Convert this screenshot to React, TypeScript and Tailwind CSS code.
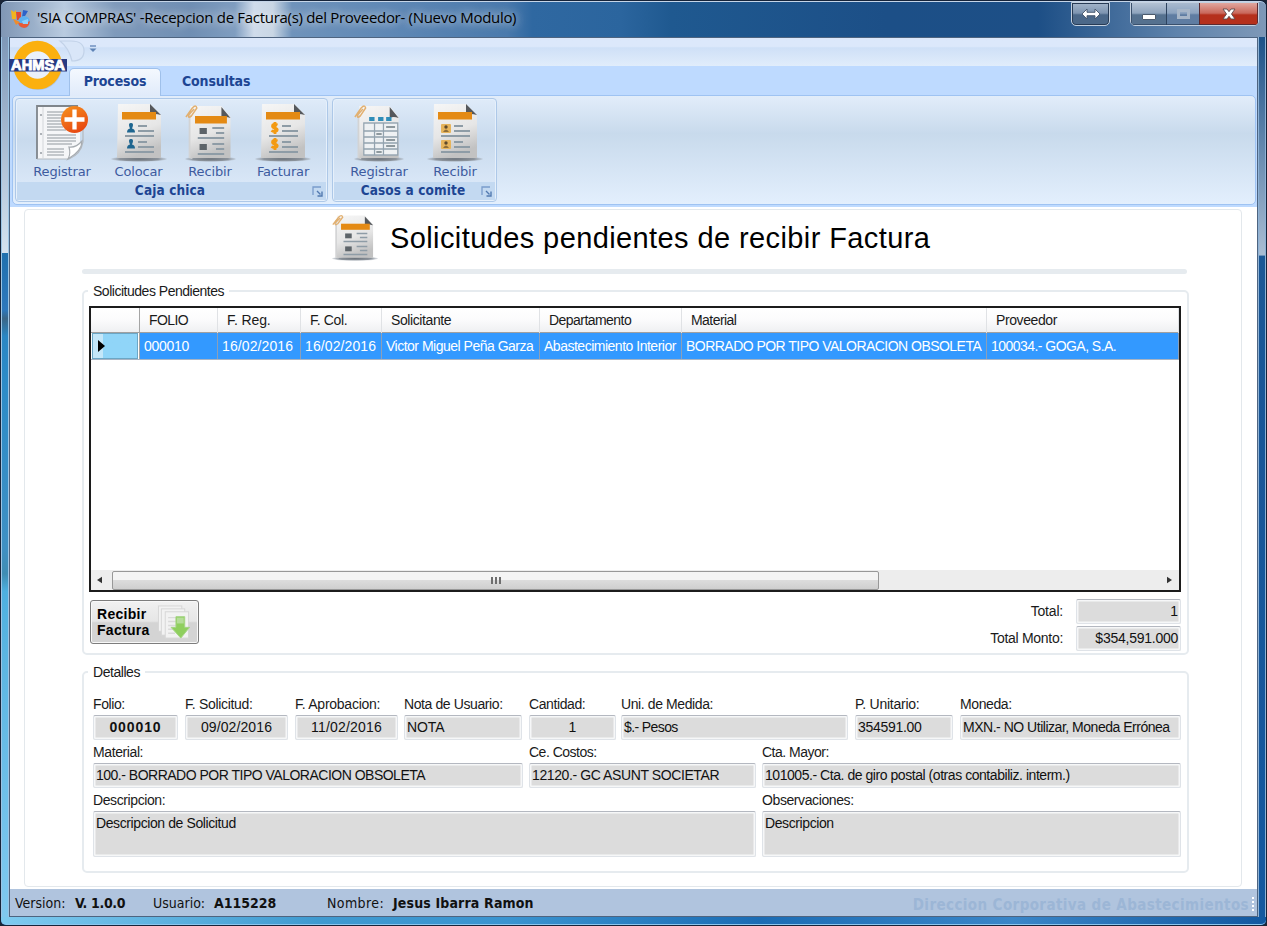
import React from "react";

type DocKind = "people" | "form" | "money" | "grid" | "box";

function Clip() {
  return (
    <path d="M1 13 L8 4 Q12 0 13 4 L7 12 Q3 15 4 11 L10 5" fill="none" stroke="#e2b070" strokeWidth="1.6" />
  );
}

function DocIcon({ kind, className }: { kind: DocKind; className: string }) {
  const clipped = kind === "form" || kind === "grid";
  const id = "paper-" + kind;
  const rows = [24, 40];
  return (
    <svg viewBox="0 0 56 58" className={className} preserveAspectRatio="none">
      <defs>
        <linearGradient id={id} x1="0" y1="0" x2="0.3" y2="1">
          <stop offset="0" stopColor="#f6f6f6" />
          <stop offset="0.6" stopColor="#e6e6e6" />
          <stop offset="1" stopColor="#c2c2c2" />
        </linearGradient>
        <radialGradient id={id + "-s"}>
          <stop offset="0" stopColor="#6d747c" />
          <stop offset="0.7" stopColor="#8c939b" />
          <stop offset="1" stopColor="#a0a8b2" stopOpacity="0.3" />
        </radialGradient>
      </defs>
      <ellipse cx="28" cy="55" rx="28" ry="2.8" fill={`url(#${id}-s)`} />
      {clipped ? (
        <>
          <path d="M4 8 L8 4 L8 55 L4 54 Z" fill="#d2d3d4" />
          <path d="M6 2 H40 L50 13 V54 H6 Z" fill={`url(#${id})`} />
          <path d="M40 3 L50 14 Q44 12 40 14 Z" fill="#55585c" />
        </>
      ) : (
        <>
          <path d="M7 0 H39 L50 11 V54 H6 Z" fill={`url(#${id})`} />
          <path d="M39 0 L50 11 Q43 9 39 11 Z" fill="#55585c" />
        </>
      )}
      {kind !== "grid" && (
        <rect x="11" y={clipped ? 12 : 8} width={clipped ? 35 : 34} height="7.5" fill="#e48a14" />
      )}
      {kind === "grid" ? (
        <g>
          <rect x="17" y="13" width="6" height="4" fill="#2f8db8" />
          <rect x="27" y="13" width="6" height="4" fill="#2f8db8" />
          <rect x="36" y="13" width="6" height="4" fill="#2f8db8" />
          <g fill="none" stroke="#93a3af" strokeWidth="1.4">
            <rect x="11" y="19" width="38" height="32" fill="#eef1f3" />
            <path d="M11 27 H49 M11 33 H49 M11 39 H49 M11 45 H49 M23 19 V51 M33 19 V51" />
          </g>
          <path d="M36 23 H46 M25 30 H31 M36 36 H46 M36 42 H46 M25 48 H31" stroke="#8d989d" strokeWidth="2" />
        </g>
      ) : (
        rows.map((y0) => {
          const y = clipped ? y0 : y0 - 2;
          return (
            <g key={y}>
              <path
                d={`M${clipped ? 30 : 27} ${y} H${clipped ? 43 : 36} M${clipped ? 34 : 27} ${y + 5} H43 M14 ${y + 10} H43`}
                stroke="#8e9ca6"
                strokeWidth="1.9"
              />
              {kind === "people" && (
                <path
                  d={`M16 ${y + 6.500} Q16 ${y + 3} 19 ${y + 2.500} Q16.500 ${y - 3} 20 ${y - 3} Q23.500 ${y - 3} 21 ${y + 2.500} Q24 ${y + 3} 24 ${y + 6.500} Z`}
                  fill="#1f6690"
                />
              )}
              {kind === "form" && <rect x="16" y={y} width="8" height="6" fill="#5d6469" />}
              {kind === "money" && (
                <path
                  d={`M22.500 ${y - 1} Q17.500 ${y - 3} 17.500 ${y} Q17.500 ${y + 1.500} 20 ${y + 2} Q23 ${y + 3} 22 ${y + 4.500} Q19 ${y + 6.500} 16.500 ${y + 4.500} M20 ${y - 4} V${y + 8}`}
                  fill="none"
                  stroke="#f39a12"
                  strokeWidth="2.8"
                />
              )}
              {kind === "box" && (
                <>
                  <rect x="14" y={y - 2} width="10" height="9" rx="1" fill="#e6b45c" />
                  <circle cx="19" cy={y + 1} r="1.7" fill="#5e4a2c" />
                  <path d={`M16 ${y + 6} Q19 ${y + 1} 22 ${y + 6} Z`} fill="#8e6e3a" />
                </>
              )}
            </g>
          );
        })
      )}
      {clipped && <Clip />}
    </svg>
  );
}

function NewDocIcon() {
  return (
    <svg viewBox="0 0 56 58" className="h-[58px] w-14">
      <defs>
        <linearGradient id="plus" x1="0" y1="0" x2="0.5" y2="1">
          <stop offset="0" stopColor="#f7941d" />
          <stop offset="1" stopColor="#e84a12" />
        </linearGradient>
      </defs>
      <path d="M3 2 H46 V42 L34 55 H3 Z" fill="#f5f6f8" />
      <path d="M3 55 V2 H44" fill="none" stroke="#7f858b" strokeWidth="1.8" />
      <path d="M3 55 H35 Q47 50 49 38 V20" fill="none" stroke="#b4b9bf" strokeWidth="1.2" />
      <path d="M9 3 V55" stroke="#d3d6da" strokeWidth="1" />
      <path d="M13 8 H31 M13 11 H28 M13 14 H27 M13 17 H27 M13 20 H28 M13 23 H29 M13 26 H32 M13 31 H42 M13 34 H42 M13 37 H42 M13 40 H38 M13 45 H30 M13 48 H30 M13 51 H30" stroke="#c3c7cb" strokeWidth="2.200" />
      <circle cx="7" cy="11" r="1.1" fill="#9da2a8" />
      <circle cx="7" cy="30" r="1.1" fill="#9da2a8" />
      <circle cx="7" cy="49" r="1.1" fill="#9da2a8" />
      <path d="M34 55 Q37 50 35 43 Q42 44 48 37 Q48 47 34 55 Z" fill="#fff" stroke="#a6abb0" strokeWidth="1.2" />
      <circle cx="40.500" cy="15.500" r="13.500" fill="url(#plus)" />
      <path d="M40.500 5.500 V25.500 M30.500 15.500 H50.500" stroke="#fff" strokeWidth="4.300" />
    </svg>
  );
}

function Launcher() {
  return (
    <svg viewBox="0 0 11 11" className="h-[11px] w-[11px]">
      <path d="M1 9 V1 H9" fill="none" stroke="#7a9ccc" strokeWidth="1.300" />
      <path d="M5 5 L8.500 8.500 M10 5.500 V10 H5.500" fill="none" stroke="#5279b0" strokeWidth="1.400" />
    </svg>
  );
}

function RibbonItem({ label, width, children }: { label: string; width: string; children: React.ReactNode }) {
  return (
    <div className={`flex flex-col items-center ${width}`}>
      <div className="flex h-[58px] items-end">{children}</div>
      <span className="mt-px h-[18px] font-['DejaVu_Sans',sans-serif] text-[13px] leading-[18px] tracking-[-0.150px] whitespace-nowrap text-[#3d5b9f]">{label}</span>
    </div>
  );
}

function RibbonGroup({ title, width, pad, titleShift, children }: { title: string; width: string; pad: string; titleShift: string; children: React.ReactNode }) {
  return (
    <div className={`flex h-[104px] flex-col rounded-[4px] border border-[#adc8e8] bg-gradient-to-b from-[#dfebf9] via-[#c8daed] via-40% to-[#e0ecfb] p-px shadow-[inset_0_0_0_1px_#e6f0fb] ${width}`}>
      <div className={`flex h-[82px] pt-[4px] ${pad}`}>{children}</div>
      <div className="flex h-[18px] items-center bg-[#c3d9f1] pr-[3px]">
        <span className={`flex-1 pb-[2px] text-center text-[13.500px] leading-[16px] font-bold tracking-[0.120px] text-[#1d4593] ${titleShift}`}>{title}</span>
        <Launcher />
      </div>
    </div>
  );
}

function Label({ children, className = "tracking-[-0.400px]" }: { children: React.ReactNode; className?: string }) {
  return <div className={`h-[20px] text-[14px] leading-[19px] whitespace-nowrap text-[#1a1a1a] ${className}`}>{children}</div>;
}

function Box({ children, className = "" }: { children: React.ReactNode; className?: string }) {
  return (
    <div className={`rounded-[2px] border border-[#dfe3e8] border-t-[#b4b8c0] bg-[#dcdcdc] px-[2px] pt-[2px] text-[14px] leading-[19px] whitespace-nowrap text-[#111] shadow-[inset_0_0_0_1.500px_#f6f7f8] ${className}`}>
      {children}
    </div>
  );
}

function Field({ label, value, box, labelClass, h = "h-[25px]" }: { label: string; value: string; box: string; labelClass?: string; h?: string }) {
  return (
    <div>
      <Label className={labelClass}>{label}</Label>
      <Box className={`${h} ${box}`}>{value}</Box>
    </div>
  );
}

const columns = [
  { head: "FOLIO", value: "000010", headTrack: "tracking-[-0.600px]", track: "tracking-[-0.300px]" },
  { head: "F. Reg.", value: "16/02/2016", headTrack: "tracking-[-0.100px]", track: "tracking-[0.100px]" },
  { head: "F. Col.", value: "16/02/2016", headTrack: "tracking-[-0.350px]", track: "tracking-[0.100px]" },
  { head: "Solicitante", value: "Victor Miguel Peña Garza", headTrack: "tracking-[-0.400px]", track: "tracking-[-0.500px]" },
  { head: "Departamento", value: "Abastecimiento Interior", headTrack: "tracking-[-0.550px]", track: "tracking-[-0.490px]" },
  { head: "Material", value: "BORRADO POR TIPO VALORACION OBSOLETA", headTrack: "tracking-[-0.550px]", track: "tracking-[-0.530px]" },
  { head: "Proveedor", value: "100034.- GOGA, S.A.", headTrack: "tracking-[-0.400px]", track: "tracking-[-0.540px]" },
];
const gridCols = "grid grid-cols-[49px_78px_83px_81px_158px_142px_305px_192px]";

function TitleBar() {
  return (
    <div className="flex h-9 items-start pr-[7px] pl-[9px]">
      <svg viewBox="0 0 22 22" className="mt-[6px] h-[22px] w-[22px]">
        <path d="M1 2 L4 4 L6 2 V11 H2 Z" fill="#f2b51d" />
        <path d="M6 4 H11 V12 H7 Z" fill="#e2492e" />
        <path d="M13 2 L18 3 L15 8 L12 9 Z" fill="#2d62c9" />
        <circle cx="14" cy="14" r="6" fill="#5db1f0" />
        <path d="M8 14 Q13 17 20 13 Q19 20 14 20 Q8 19 8 14 Z" fill="#ea5a35" />
        <path d="M12 13 L18 11 L18 16 L13 16 Z" fill="#8fd0fb" />
        <path d="M3 11 L10 14 L6 17 Z" fill="#f08c2a" />
      </svg>
      <div className="mt-[4px] ml-[5px] font-['Open_Sans','Noto_Sans',sans-serif] text-[15px] leading-[22px] tracking-[-0.300px] whitespace-nowrap text-black [text-shadow:0_0_8px_#ffffffaa,0_0_12px_#ffffff88]">
        'SIA COMPRAS' -Recepcion de Factura(s) del Proveedor- (Nuevo Modulo)
      </div>
      <div className="ml-auto flex h-[24px] w-[39px] items-center justify-center rounded-b-[5px] border border-[#c3d0df] bg-gradient-to-b from-[#a3b5ca] from-0% via-[#7e95b1] via-46% to-[#4b6889] to-54% shadow-[inset_0_0_0_1px_#273b55]">
        <svg viewBox="0 0 20 12" className="h-3 w-5">
          <path d="M1 6 L6 1 V4.300 H14 V1 L19 6 L14 11 V7.700 H6 V11 Z" fill="#fff" stroke="#44546a" strokeWidth="0.900" />
        </svg>
      </div>
      <div className="ml-[20px] flex h-[24px] overflow-hidden rounded-b-[5px] border border-[#c3d0df]">
        <div className="flex w-[36px] items-center justify-center border-r border-[#2d435f] bg-gradient-to-b from-[#b3c2d4] via-[#8fa4bd] via-46% to-[#55718f] to-54% shadow-[inset_1px_-1px_0_#3a506c]">
          <div className="mt-[5px] h-[6px] w-[14px] rounded-[1px] border border-[#4c5a6c] bg-white" />
        </div>
        <div className="flex w-[33px] items-center justify-center border-r border-[#5a2a2f] bg-gradient-to-b from-[#a9bacf] via-[#8ca3bf] via-46% to-[#5f7da2] to-54% shadow-[inset_0_-1px_0_#3a506c]">
          <div className="h-[10px] w-[13px] border-[3px] border-[#a7b6c8]" />
        </div>
        <div className="flex w-[58px] items-center justify-center bg-gradient-to-b from-[#e0a79f] via-[#c9685b] via-46% to-[#b5301c] to-54% shadow-[inset_-1px_-1px_0_#5c2a30]">
          <svg viewBox="0 0 14 12" className="h-3 w-[14px]">
            <path d="M1 1 H5 L7 3.700 L9 1 H13 L9.500 6 L13 11 H9 L7 8.300 L5 11 H1 L4.500 6 Z" fill="#fff" stroke="#5b4a4c" strokeWidth="0.900" />
          </svg>
        </div>
      </div>
    </div>
  );
}

function Ribbon() {
  return (
    <div className="flex h-[169px] flex-col bg-[#bedaff] font-['DejaVu_Sans_Condensed','DejaVu_Sans',sans-serif]">
      <div className="relative h-[28px] bg-gradient-to-b from-[#dce8fb] from-30% via-[#cfe0f7] via-35% to-[#e1edfb]">
        <svg viewBox="0 0 90 56" className="absolute top-0 left-[-1px] z-10 h-14 w-[90px]">
          <path d="M51 3 H62 Q75 3 75 13 Q75 23 63 23 Q60 10 51 3 Z" fill="#d9e6f8" stroke="#c2d2e8" strokeWidth="1.200" />
          <circle cx="29" cy="28" r="18" fill="none" stroke="#8c9aae" strokeWidth="12" opacity="0.350" />
          <circle cx="28.500" cy="27" r="19" fill="#eaf1fb" stroke="#fbb00f" strokeWidth="10.500" />
          <rect x="0" y="21" width="58" height="12.500" fill="#273a82" />
          <text x="29" y="32" textAnchor="middle" textLength="54" lengthAdjust="spacingAndGlyphs" fontFamily="Liberation Sans" fontWeight="bold" fontSize="14" fill="#fff" stroke="#fff" strokeWidth="0.900">AHMSA</text>
          <path d="M81 8 H87" stroke="#5f83b6" strokeWidth="1.300" />
          <path d="M80.500 10.500 H87.500 L84 14 Z" fill="#5f83b6" />
        </svg>
      </div>
      <div className="flex h-[29px] items-end pl-[59px]">
        <div className="z-10 mb-[-1px] h-[28px] w-[92px] rounded-t-[5px] border border-b-0 border-[#9fc0ea] bg-gradient-to-b from-[#f4f8fe] to-[#e0ebfa] pt-[3px] text-center text-[14px] leading-[19px] font-bold tracking-[-0.150px] text-[#1d4593]">Procesos</div>
        <div className="mb-[4px] ml-[21px] text-[14px] leading-[19px] font-bold tracking-[-0.150px] text-[#1d4593]">Consultas</div>
      </div>
      <div className="ml-[2px] flex h-[110px] w-[1244px] gap-1 rounded-[5px] border border-[#9fc3f2] bg-gradient-to-b from-[#e2edfa] via-[#c8daec] via-35% to-[#e3effd] pt-[2px] pl-[2px]">
        <RibbonGroup title="Caja chica" width="w-[313px]" pad="pl-[7px]" titleShift="pl-[11px]">
          <RibbonItem label="Registrar" width="w-[76px]"><NewDocIcon /></RibbonItem>
          <RibbonItem label="Colocar" width="w-[77px]"><DocIcon kind="people" className="h-[58px] w-14" /></RibbonItem>
          <RibbonItem label="Recibir" width="w-[66px]"><DocIcon kind="form" className="h-[58px] w-[51px]" /></RibbonItem>
          <RibbonItem label="Facturar" width="w-[80px]"><DocIcon kind="money" className="h-[58px] w-14" /></RibbonItem>
        </RibbonGroup>
        <RibbonGroup title="Casos a comite" width="w-[165px]" pad="pl-[7px]" titleShift="pl-[11px]">
          <RibbonItem label="Registrar" width="w-[76px]"><DocIcon kind="grid" className="h-[58px] w-[50px]" /></RibbonItem>
          <RibbonItem label="Recibir" width="w-[76px]"><DocIcon kind="box" className="h-[58px] w-14" /></RibbonItem>
        </RibbonGroup>
      </div>
    </div>
  );
}

function PendingTable() {
  return (
    <div className="flex h-[286px] w-[1092px] flex-col border-2 border-[#1c1c1c] bg-white text-[14px]">
      <div className={`h-[25px] border-b border-[#a0a0a0] bg-gradient-to-b from-white via-[#fbfbfc] to-[#eff0f2] text-[#1a1a1a] ${gridCols}`}>
        <div className="border-r border-[#a5a5a5]" />
        {columns.map((c) => (
          <div key={c.head} className={`border-r border-[#e0e2e5] pl-[9px] leading-[25px] whitespace-nowrap ${c.headTrack}`}>{c.head}</div>
        ))}
      </div>
      <div className={`h-[27px] border-b border-[#a8b4c4] bg-[#3399ff] text-white ${gridCols}`}>
        <div className="flex items-center border-r border-[#a5a5a5] bg-white pr-[1px] pl-[1px]">
          <div className="flex h-full w-full items-center border border-[#6ba6c5] bg-gradient-to-r from-[#c4e7f9] from-22% to-[#90d5f8] to-22%">
            <svg viewBox="0 0 8 12" className="ml-[5px] h-3 w-2"><path d="M0 0 L7 6 L0 12 Z" fill="#000" /></svg>
          </div>
        </div>
        {columns.map((c) => (
          <div key={c.head} className={`border-r border-[#8c9fb8] pl-[4px] leading-[26px] whitespace-nowrap ${c.track}`}>{c.value}</div>
        ))}
      </div>
      <div className="mt-auto flex h-[20px] items-center bg-[#ededed]">
        <svg viewBox="0 0 6 8" className="ml-[6px] h-2 w-[5px]"><path d="M6 0 V8 L0 4 Z" fill="#333" /></svg>
        <div className="ml-[10px] flex h-[19px] w-[767px] items-center justify-center gap-[2px] rounded-[2px] border border-[#989898] bg-gradient-to-b from-[#f4f4f4] from-45% via-[#dcdcdc] via-50% to-[#cfcfcf]">
          <i className="h-[7px] w-[2px] bg-[#6e6e6e]" />
          <i className="h-[7px] w-[2px] bg-[#6e6e6e]" />
          <i className="h-[7px] w-[2px] bg-[#6e6e6e]" />
        </div>
        <svg viewBox="0 0 6 8" className="mr-[7px] ml-auto h-2 w-[5px]"><path d="M0 0 V8 L6 4 Z" fill="#333" /></svg>
      </div>
    </div>
  );
}

function ReceiveButton() {
  return (
    <button className="flex h-[44px] w-[109px] items-center rounded-[3px] border border-[#7d7d7d] bg-gradient-to-b from-[#f1f1f1] from-0% via-[#e6e6e6] via-48% to-[#d4d4d4] to-52% pl-[6px] text-left text-[14px] leading-[16px] font-bold text-black shadow-[inset_0_0_0_1px_#f8f8f8]">
      <span className="w-[60px] tracking-[0.300px]">Recibir<br />Factura</span>
      <svg viewBox="0 0 34 38" className="h-[37px] w-[34px]">
        <g stroke="#d6d6d6" strokeWidth="1" fill="#f2f2f2">
          <rect x="1" y="2" width="24" height="26" />
          <rect x="4" y="5" width="24" height="27" />
          <rect x="8" y="8" width="24" height="27" />
        </g>
        <path d="M11 14 H19 M11 18 H19 M11 22 H19 M11 26 H17 M11 30 H18" stroke="#dadada" strokeWidth="1.500" />
        <path d="M19 13 H28 V24 H33 L24 35 L14 24 H19 Z" fill="#8fcf5e" stroke="#a6d486" strokeWidth="1" />
        <path d="M20 14 H27 V20 H20 Z" fill="#b5dd99" />
      </svg>
    </button>
  );
}

const fieldset = "h-full w-[1107px] rounded-[5px] border-2 border-[#e6ebef]";
const legend = "ml-[4px] h-5 px-[5px] text-[14px] leading-5 text-[#1a1a1a]";

function Content() {
  return (
    <div className="flex h-[682px] flex-col bg-white pt-[2px] pl-[14px] font-['Liberation_Sans',Arial,sans-serif]">
      <div className="flex h-[678px] w-[1218px] flex-col rounded-[4px] border border-[#e3e8ec] pl-[57px]">
        <div className="flex h-[58px] pt-[4px] pl-[250px]">
          <DocIcon kind="form" className="h-[47px] w-[46px]" />
          <h1 className="ml-[12px] text-[29px] leading-[48px] tracking-[0.400px] whitespace-nowrap text-black">Solicitudes pendientes de recibir Factura</h1>
        </div>
        <div className="mt-px h-[5px] w-[1105px] rounded-full bg-[#e6ebef]" />
        <div className="mt-[7px] h-[374px] w-[1107px]">
          <fieldset className={fieldset}>
            <legend className={`${legend} tracking-[-0.480px]`}>Solicitudes Pendientes</legend>
            <div className="pt-[5px] pl-[5px]">
              <PendingTable />
              <div className="mt-[7px] flex w-[1092px] justify-between">
                <div className="pt-px pl-px"><ReceiveButton /></div>
                <div className="grid grid-cols-[80px_105px] gap-x-[13px] gap-y-[2px] text-right">
                  <Label className="pt-[3px] tracking-[-0.200px]">Total:</Label>
                  <Box className="h-[25px]">1</Box>
                  <Label className="pt-[3px] tracking-[-0.300px]">Total Monto:</Label>
                  <Box className="h-[25px] tracking-[-0.250px]">$354,591.000</Box>
                </div>
              </div>
            </div>
          </fieldset>
        </div>
        <div className="mt-[7px] h-[211px] w-[1107px]">
          <fieldset className={fieldset}>
            <legend className={`${legend} tracking-[-0.450px]`}>Detalles</legend>
            <div className="flex flex-col pt-[13px] pl-[9px]">
              <div className="grid h-[48px] grid-cols-[92px_110px_109px_125px_92px_234px_105px_221px]">
                <Field label="Folio:" value="000010" box="w-[85px] text-center font-bold tracking-[0.900px]" />
                <Field label="F. Solicitud:" value="09/02/2016" box="w-[103px] text-center tracking-[0.100px]" labelClass="tracking-[-0.300px]" />
                <Field label="F. Aprobacion:" value="11/02/2016" box="w-[103px] text-center tracking-[0.200px]" labelClass="tracking-[-0.250px]" />
                <Field label="Nota de Usuario:" value="NOTA" box="w-[118px] tracking-[-0.100px]" />
                <Field label="Cantidad:" value="1" box="w-[87px] text-center" />
                <Field label="Uni. de Medida:" value="$.- Pesos" box="w-[227px] tracking-[-0.600px]" />
                <Field label="P. Unitario:" value="354591.00" box="w-[98px] tracking-[-0.300px]" labelClass="tracking-[-0.250px]" />
                <Field label="Moneda:" value="MXN.- NO Utilizar, Moneda Errónea" box="w-[221px] tracking-[-0.480px]" />
              </div>
              <div className="grid h-[48px] grid-cols-[436px_233px_419px]">
                <Field label="Material:" value="100.- BORRADO POR TIPO VALORACION OBSOLETA" box="w-[430px] tracking-[-0.500px]" />
                <Field label="Ce. Costos:" value="12120.- GC ASUNT SOCIETAR" box="w-[227px] tracking-[-0.400px]" labelClass="tracking-[-0.500px]" />
                <Field label="Cta. Mayor:" value="101005.- Cta. de giro postal (otras contabiliz. interm.)" box="w-[419px] tracking-[-0.450px]" labelClass="tracking-[-0.500px]" />
              </div>
              <div className="grid grid-cols-[669px_419px]">
                <Field label="Descripcion:" value="Descripcion de Solicitud" box="w-[663px] tracking-[-0.400px]" h="h-[46px]" />
                <Field label="Observaciones:" value="Descripcion" box="w-[419px] tracking-[-0.400px]" h="h-[46px]" />
              </div>
            </div>
          </fieldset>
        </div>
      </div>
    </div>
  );
}

function StatusBar() {
  return (
    <div className="flex h-[27px] items-center bg-[#b0c4de] pt-[2px] pl-[5px] font-['DejaVu_Sans_Condensed','DejaVu_Sans',sans-serif] text-[14px] whitespace-nowrap text-[#111]">
      <span className="w-[60px]">Version:</span>
      <b className="w-[78px] tracking-[-0.350px]">V. 1.0.0</b>
      <span className="w-[61px]">Usuario:</span>
      <b className="w-[113px]">A115228</b>
      <span className="w-[66px] tracking-[0.400px]">Nombre:</span>
      <b className="tracking-[0.150px]">Jesus Ibarra Ramon</b>
      <b className="mt-[4px] ml-auto text-[15px] tracking-[0.400px] text-[#9cb6d6]">Direccion Corporativa de Abastecimientos</b>
      <div className="mx-[3px] h-[14px] border-l-2 border-dotted border-white" />
    </div>
  );
}

export default function App() {
  return (
    <div className="h-[926px] w-[1267px] overflow-hidden bg-[#1b2536]">
      <div className="flex h-full w-full flex-col rounded-t-[7px] rounded-b-[6px] border border-[#16243a] bg-[linear-gradient(to_bottom,#1d4f86_0%,#1d5288_4%,#a9bdd3_27.500%,#1b5795_27.600%,#14589f_100%)]">
        <div className="h-9 shrink-0 rounded-t-[6px] border-t border-[#c5d5e8] bg-[linear-gradient(to_right,#8097b5_0%,#9fb4cd_3%,#b9cbe0_5%,#7f9abb_9%,#6f8eb3_15%,#7f9dc0_18.500%,#d0dceb_20%,#c9d6e4_21.500%,#6f93bb_23%,#5c86b4_32%,#4a79ac_40%,#2f68a1_42%,#2b659e_49%,#1f5990_53%,#1c4f87_70%,#1d4f86_82%,#5f83ac_93%,#7e98b7_100%)]">
          <TitleBar />
        </div>
        <div className="flex min-h-0 flex-1">
          <div className="w-[8px] border-x border-[#9cc4e4] bg-[linear-gradient(to_bottom,#7e98b8_0%,#d5e2ef_24.500%,#2070ae_24.600%,#2d78bd_31%,#3a6688_32%,#2a86c4_34%,#2d8cc8_40%,#3f90c4_58%,#3f8db4_61%,#4eb0e0_63%,#5bb5e2_70%,#80c9f0_100%)]" />
          <div className="flex w-[1249px] flex-col border border-[#4e6480]">
            <Ribbon />
            <Content />
            <StatusBar />
          </div>
          <div className="w-[8px] border-x border-[#8fb3d6]" />
        </div>
        <div className="h-[8px] shrink-0 rounded-b-[5px] border-b border-[#8cc6ee] bg-[linear-gradient(to_right,#7ecbf0_0%,#3f9ad0_25%,#3a94d0_40%,#1b6cb4_60%,#3a86c8_80%,#1258a0_100%)]" />
      </div>
    </div>
  );
}
